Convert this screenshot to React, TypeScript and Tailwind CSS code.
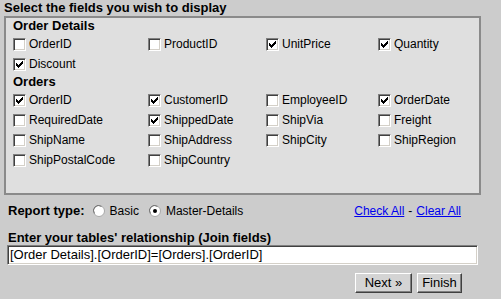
import React from "react";

const CHECK_PATH =
  "M9 3h1v1h-1z M8 4h2v1h-2z M3 5h1v1h-1z M7 5h3v1h-3z M3 6h2v1h-2z M6 6h3v1h-3z M3 7h5v1h-5z M4 8h3v1h-3z M5 9h1v1h-1z";

function Box({ checked }: { checked?: boolean }) {
  return (
    <span className="relative block w-[13px] h-[13px] shrink-0 bg-white border border-t-[#808080] border-l-[#808080] border-b-white border-r-white shadow-[inset_1px_1px_0_#404040,inset_-1px_-1px_0_#d4d0c8]">
      {checked && (
        <svg
          width="13"
          height="13"
          viewBox="0 0 13 13"
          className="absolute left-[-1px] top-[-1px]"
          shapeRendering="crispEdges"
        >
          <path d={CHECK_PATH} fill="#000" />
        </svg>
      )}
    </span>
  );
}

function Field({ label, checked }: { label: string; checked?: boolean }) {
  return (
    <div className="flex items-center h-[20px] gap-[3px]">
      <Box checked={checked} />
      <span className="text-[12px] leading-[14px] text-black">{label}</span>
    </div>
  );
}

function Radio({ checked }: { checked?: boolean }) {
  return (
    <svg width="12" height="12" viewBox="0 0 12 12" className="shrink-0">
      <circle cx="6" cy="6" r="5.5" fill="#ffffff" stroke="#a8a8a8" strokeWidth="1" />
      <path d="M1.5 8.5 A5 5 0 0 1 8.5 1.5" fill="none" stroke="#707070" strokeWidth="1" />
      {checked && <circle cx="6" cy="6" r="2" fill="#000" />}
    </svg>
  );
}

const cols = "grid grid-cols-[135px_118px_112px_1fr]";

export default function App() {
  return (
    <div className="w-[501px] h-[299px] bg-[#cccccc] font-['Liberation_Sans',Arial,sans-serif] text-black overflow-hidden">
      <div className="h-[16px] pl-[4px] text-[13px] leading-[16px] font-bold">
        Select the fields you wish to display
      </div>
      <div className="ml-[4px] w-[477px] h-[179px] bg-[#dfdfdf] border-2 border-[#8a8a8a] pl-[7px]">
        <div className="h-[16px] text-[13px] leading-[15px] font-bold">Order Details</div>
        <div className={cols}>
          <Field label="OrderID" />
          <Field label="ProductID" />
          <Field label="UnitPrice" checked />
          <Field label="Quantity" checked />
          <Field label="Discount" checked />
        </div>
        <div className="h-[16px] text-[13px] leading-[15px] font-bold">Orders</div>
        <div className={cols}>
          <Field label="OrderID" checked />
          <Field label="CustomerID" checked />
          <Field label="EmployeeID" />
          <Field label="OrderDate" checked />
          <Field label="RequiredDate" />
          <Field label="ShippedDate" checked />
          <Field label="ShipVia" />
          <Field label="Freight" />
          <Field label="ShipName" />
          <Field label="ShipAddress" />
          <Field label="ShipCity" />
          <Field label="ShipRegion" />
          <Field label="ShipPostalCode" />
          <Field label="ShipCountry" />
        </div>
      </div>
      <div className="mt-[6px] h-[20px] flex items-center pl-[8px] pr-[40px]">
        <span className="text-[13px] font-bold mr-[8px]">Report type:</span>
        <label className="flex items-center gap-[5px] text-[12px] mr-[10px]">
          <Radio />
          <span>Basic</span>
        </label>
        <label className="flex items-center gap-[5px] text-[12px]">
          <Radio checked />
          <span>Master-Details</span>
        </label>
        <div className="ml-auto text-[12px] flex gap-[4px]">
          <a className="text-[#0000ee] underline" href="#">Check All</a>
          <span>-</span>
          <a className="text-[#0000ee] underline" href="#">Clear All</a>
        </div>
      </div>
      <div className="mt-[10px] pl-[8px] h-[14px] text-[13px] leading-[14px] font-bold">
        Enter your tables' relationship (Join fields)
      </div>
      <div className="ml-[7px] w-[471px] h-[20px] bg-white border border-t-[#808080] border-l-[#808080] border-b-white border-r-white shadow-[inset_1px_1px_0_#404040,inset_-1px_-1px_0_#d4d0c8] flex items-center pl-[2px] text-[13px]">
        [Order Details].[OrderID]=[Orders].[OrderID]
      </div>
      <div className="mt-[8px] flex justify-end gap-[5px] pr-[39px]">
        <button className="w-[57px] h-[20px] bg-[#d4d4d4] border border-t-white border-l-white border-b-[#404040] border-r-[#404040] shadow-[inset_-1px_-1px_0_#808080] text-[13px] leading-[16px]">
          Next »
        </button>
        <button className="w-[45px] h-[20px] bg-[#d4d4d4] border border-t-white border-l-white border-b-[#404040] border-r-[#404040] shadow-[inset_-1px_-1px_0_#808080] text-[13px] leading-[16px]">
          Finish
        </button>
      </div>
    </div>
  );
}
